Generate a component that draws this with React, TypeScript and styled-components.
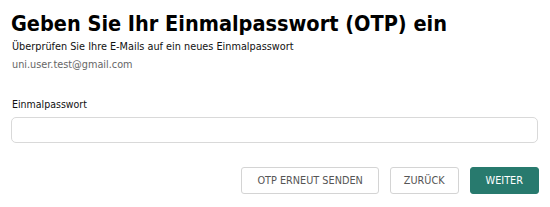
import React from 'react';
import styled, { createGlobalStyle } from 'styled-components';

const GlobalStyle = createGlobalStyle`
  html, body {
    margin: 0;
    padding: 0;
    background: #ffffff;
  }
  body {
    font-family: "DejaVu Sans Condensed", "DejaVu Sans", Verdana, sans-serif;
    font-stretch: condensed;
    color: #000;
  }
`;

const TEAL = '#287a6e';

const App = () => (
  <>
    <GlobalStyle />
    <Page>
      <Title>Geben Sie Ihr Einmalpasswort (OTP) ein</Title>
      <Subtitle>Überprüfen Sie Ihre E-Mails auf ein neues Einmalpasswort</Subtitle>
      <Email>uni.user.test@gmail.com</Email>
      <Field>
        <Label htmlFor="otp">Einmalpasswort</Label>
        <Input id="otp" type="text" />
      </Field>
      <Actions>
        <Button>OTP erneut senden</Button>
        <Button narrow>Zurück</Button>
        <Button primary>Weiter</Button>
      </Actions>
    </Page>
  </>
);

export default App;

const Page = styled.div`
  width: 550px;
  height: 207px;
  box-sizing: border-box;
  padding: 11px 11px 0 11px;
  display: flex;
  flex-direction: column;
`;

const Title = styled.h1`
  margin: 0;
  font-size: 21.5px;
  line-height: 26px;
  font-weight: bold;
  color: #000;
`;

const Subtitle = styled.p`
  margin: 3px 0 0 1px;
  font-size: 10.8px;
  line-height: 14px;
  color: #111;
`;

const Email = styled.p`
  margin: 4px 0 0 1px;
  font-size: 10.8px;
  line-height: 14px;
  color: #666;
`;

const Field = styled.div`
  margin-top: 26px;
  display: flex;
  flex-direction: column;
  gap: 6px;
`;

const Label = styled.label`
  font-size: 10.5px;
  line-height: 13px;
  color: #111;
  padding-left: 1px;
`;

const Input = styled.input`
  box-sizing: border-box;
  width: 527px;
  height: 26px;
  border: 1px solid #d9d9d9;
  border-radius: 5px;
  outline: none;
  padding: 0 8px;
  font-family: inherit;
  font-size: 11px;
`;

const Actions = styled.div`
  margin-top: 24px;
  display: flex;
  justify-content: flex-end;
  gap: 11px;
`;

const Button = styled.button<{ primary?: boolean; narrow?: boolean }>`
  box-sizing: border-box;
  height: 27px;
  padding: 0 ${({ narrow }) => (narrow ? '13px' : '15px')};
  border-radius: 3px;
  border: 1px solid ${({ primary }) => (primary ? TEAL : '#d4d4d4')};
  background: ${({ primary }) => (primary ? TEAL : '#fff')};
  color: ${({ primary }) => (primary ? '#fff' : '#555')};
  font-family: inherit;
  font-stretch: condensed;
  font-size: 10.8px;
  text-transform: uppercase;
  cursor: pointer;
`;
